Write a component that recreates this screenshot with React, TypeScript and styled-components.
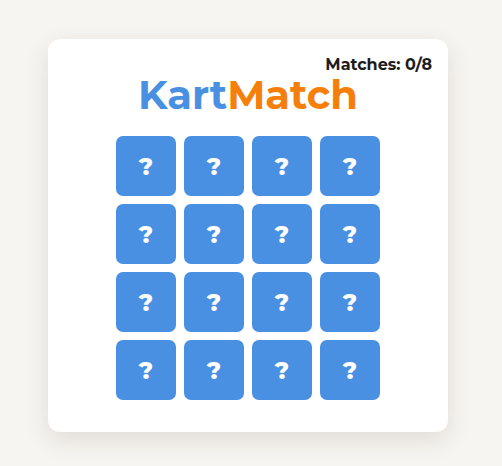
import React from "react";
import styled, { createGlobalStyle } from "styled-components";

const GlobalStyle = createGlobalStyle`
    html, body {
        margin: 0;
        padding: 0;
        background: #f7f5f1;
        font-family: "Montserrat", "Noto Sans", "Liberation Sans", sans-serif;
    }
`;

const TILE_COUNT = 16;

export default function App() {
    return (
        <>
            <GlobalStyle />
            <Page>
                <Card>
                    <Score>Matches: 0/8</Score>
                    <Title>
                        <Kart>Kart</Kart>
                        <Match>Match</Match>
                    </Title>
                    <Grid>
                        {Array.from({ length: TILE_COUNT }).map((_, i) => (
                            <Tile key={i}>?</Tile>
                        ))}
                    </Grid>
                </Card>
            </Page>
        </>
    );
}

const Page = styled.div`
    width: 502px;
    height: 466px;
    display: flex;
    padding: 39px 0 0 48px;
    box-sizing: border-box;
`;

const Card = styled.div`
    width: 400px;
    height: 393px;
    box-sizing: border-box;
    background: #fff;
    border-radius: 12px;
    box-shadow: 0 8px 24px rgba(60, 45, 30, 0.12);
    padding: 16px 16px 32px;
    display: flex;
    flex-direction: column;
    align-items: center;
`;

const Score = styled.div`
    align-self: flex-end;
    font-size: 16px;
    line-height: 20px;
    font-weight: 700;
    color: #1c1c1c;
`;

const Title = styled.h1`
    margin: 0;
    font-size: 40px;
    line-height: 40px;
    font-weight: 700;
`;

const Kart = styled.span`
    color: #4a90e2;
`;

const Match = styled.span`
    color: #f57f0a;
`;

const Grid = styled.div`
    margin-top: 21px;
    display: grid;
    grid-template-columns: repeat(4, 60px);
    grid-auto-rows: 60px;
    gap: 8px;
`;

const Tile = styled.div`
    background: #4a90e2;
    border-radius: 7px;
    display: flex;
    align-items: center;
    justify-content: center;
    color: #fff;
    font-size: 24px;
    font-weight: 800;
    cursor: pointer;
`;
